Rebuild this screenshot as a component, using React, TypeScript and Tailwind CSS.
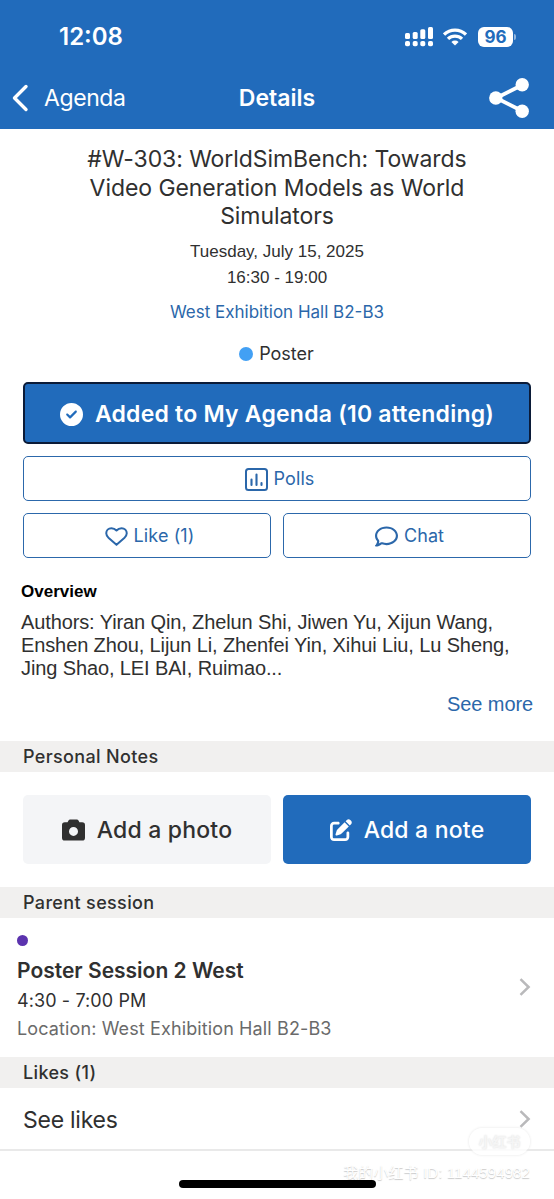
import React from 'react';
import { FaCircleCheck, FaPenToSquare, FaRegComment } from 'react-icons/fa6';

const SignalIcon = () => (
    <svg width="28" height="20" viewBox="0 0 28 20" fill="currentColor">
        <rect x="0" y="6" width="5" height="6" rx="1.5" />
        <rect x="7.7" y="5" width="5" height="7" rx="1.5" />
        <rect x="15.3" y="2.3" width="5" height="9.7" rx="1.5" />
        <rect x="23" y="0" width="5" height="12" rx="1.5" />
        <rect x="0" y="14" width="5" height="5.3" rx="1.8" />
        <rect x="7.7" y="14" width="5" height="5.3" rx="1.8" />
        <rect x="15.3" y="14" width="5" height="5.3" rx="1.8" />
        <rect x="23" y="14" width="5" height="5.3" rx="1.8" />
    </svg>
);

const WifiIcon = () => (
    <svg width="24" height="18" viewBox="0 0 24 18" fill="none" stroke="currentColor" strokeWidth="3.3">
        <path d="M1 6.6a15.6 15.6 0 0 1 22 0" />
        <path d="M5 10.9a10 10 0 0 1 14 0" />
        <path d="M12 17.6l-3.6-3.5a5.1 5.1 0 0 1 7.2 0z" fill="currentColor" stroke="none" />
    </svg>
);

const ShareIcon = () => (
    <svg width="42" height="42" viewBox="0 0 42 42" fill="currentColor">
        <path d="M34.7 7.7L8.3 21l26.4 13.3" fill="none" stroke="currentColor" strokeWidth="3.8" />
        <circle cx="34.2" cy="7.7" r="6.7" />
        <circle cx="7.8" cy="21" r="6.7" />
        <circle cx="34.2" cy="34.3" r="6.7" />
    </svg>
);

const PollIcon = () => (
    <svg width="23" height="23" viewBox="0 0 23 23" fill="none" stroke="currentColor" strokeLinecap="round">
        <rect x="1" y="1" width="21" height="21" rx="2.5" strokeWidth="2" />
        <path d="M6.500 11.500v5.500M11.500 6.500v10.500M16.500 15v2" strokeWidth="2.1" />
    </svg>
);

const HeartIcon = () => (
    <svg width="23" height="19" viewBox="0 0 24 20" fill="none" stroke="currentColor" strokeWidth="2.1" strokeLinejoin="round">
        <path d="M12 3.7C10.3 1.8 8.7 1.2 6.7 1.2 3.4 1.2 1.2 3.5 1.2 6.6c0 2.1 1 3.5 2.6 5.1L12 18.8l8.2-7.1c1.6-1.6 2.6-3 2.6-5.1 0-3.1-2.2-5.4-5.5-5.4-2 0-3.6.6-5.3 2.5z" />
    </svg>
);

const CameraIcon = () => (
    <svg width="23" height="22" viewBox="0 0 24 22" fill="currentColor" fillRule="evenodd">
        <path d="M8.5 0h7c.8 0 1.3.4 1.7 1l1 1.9H21a3 3 0 0 1 3 3V19a3 3 0 0 1-3 3H3a3 3 0 0 1-3-3V5.9a3 3 0 0 1 3-3h2.8L6.8 1C7.2.4 7.7 0 8.5 0zM12 7.8a4.7 4.7 0 1 0 0 9.4 4.7 4.7 0 0 0 0-9.4z" />
    </svg>
);

const Chevron = () => (
    <svg width="12" height="18" viewBox="0 0 12 18" fill="none" stroke="#b9b9bb" strokeWidth="2.5" className="mb-[2px] shrink-0">
        <path d="M1.5 1.2L9.6 9l-8.1 7.8" />
    </svg>
);

const SectionBar = ({ title, className = '' }: { title: string; className?: string }) => (
    <h2 className={`flex h-[31px] items-center bg-[#f1f0ef] pt-px pl-[23px] text-lg font-medium tracking-[0.35px] text-[#303030] ${className}`}>
        {title}
    </h2>
);

const outlineButton = 'flex h-[45px] items-center justify-center gap-[6px] rounded-[5px] border-[1.5px] border-[#2c68ab] pt-px pl-[5px] text-lg tracking-[0.1px] text-[#2b67aa]';

const App: React.FC = () => {
    return (
        <div className="relative h-[1199px] w-[554px] overflow-hidden bg-white font-['Inter',sans-serif] text-[#303030]">
            <header className="h-[129px] bg-[#216bbb] text-white">
                <div className="flex h-[67px] items-center pt-[7px] pr-[38px] pl-[59px]">
                    <span className="text-2xl font-semibold">12:08</span>
                    <div className="ml-auto flex items-center">
                        <SignalIcon />
                        <span className="ml-[10px]"><WifiIcon /></span>
                        <span className="ml-[11px] flex h-5 w-[35px] items-center justify-center rounded-md bg-white pt-px text-[17px] font-bold text-[#216bbb]">96</span>
                        <span className="ml-px h-[6px] w-[2px] rounded-r-full bg-white/50" />
                    </div>
                </div>
                <nav className="grid h-[62px] grid-cols-3 items-center px-[12px]">
                    <button className="flex items-center gap-[15px] text-left">
                        <svg width="17" height="28" viewBox="0 0 17 28" fill="none" stroke="currentColor" strokeWidth="3.4" strokeLinecap="round" strokeLinejoin="round">
                            <path d="M14 2.5L2.5 14 14 25.5" />
                        </svg>
                        <span className="text-[23px] tracking-[-0.4px]">Agenda</span>
                    </button>
                    <h1 className="text-center text-[23px] font-semibold">Details</h1>
                    <button className="mr-[12px] justify-self-end"><ShareIcon /></button>
                </nav>
            </header>

            <section className="flex flex-col items-center pt-[16px] text-center">
                <h2 className="text-[23px] leading-[28.7px] tracking-[-0.07px]">
                    #W-303: WorldSimBench: Towards<br />Video Generation Models as World<br />Simulators
                </h2>
                <p className="mt-[8px] font-['Liberation_Sans',sans-serif] text-[17px] leading-[25.5px]">
                    Tuesday, July 15, 2025<br />16:30 - 19:00
                </p>
                <a href="#" className="mt-[9px] text-[17px] leading-[26px] text-[#2b67aa]">West Exhibition Hall B2-B3</a>
                <p className="mt-[16px] mr-px flex items-center gap-[6px] text-lg leading-[26px]">
                    <span className="size-[14px] rounded-full bg-[#42a0f4]" />
                    Poster
                </p>
            </section>

            <section className="mt-[15px] grid grid-cols-2 gap-3 px-[23px]">
                <button className="col-span-2 flex h-[62px] items-center justify-center gap-3 rounded-[5px] border-2 border-[#0b1b38] bg-[#216bbb] pt-[2px] text-[23px] font-semibold tracking-[0.22px] text-white">
                    <FaCircleCheck size={23} />
                    Added to My Agenda (10 attending)
                </button>
                <button className={`col-span-2 ${outlineButton}`}><PollIcon />Polls</button>
                <button className={outlineButton}><HeartIcon />Like (1)</button>
                <button className={outlineButton}><FaRegComment size={23} />Chat</button>
            </section>

            <section className="mt-[22px] px-[21px] font-['Liberation_Sans',sans-serif]">
                <h3 className="text-[17px] leading-6 font-bold text-black">Overview</h3>
                <p className="mt-[7px] text-xl leading-[23px] tracking-[-0.115px]">
                    Authors: Yiran Qin, Zhelun Shi, Jiwen Yu, Xijun Wang,<br />
                    Enshen Zhou, Lijun Li, Zhenfei Yin, Xihui Liu, Lu Sheng,<br />
                    Jing Shao, LEI BAI, Ruimao...
                </p>
                <button className="mt-[11px] block w-full text-right text-xl leading-[26px] tracking-[-0.1px] text-[#2b67aa]">See more</button>
            </section>

            <SectionBar title="Personal Notes" className="mt-[24px]" />
            <div className="grid h-[115px] grid-cols-2 gap-3 px-[23px] pt-[23px]">
                <button className="flex h-[69px] items-center justify-center gap-3 rounded-[5px] bg-[#f4f5f7] pt-px text-[23px] font-medium tracking-[0.2px]">
                    <CameraIcon />
                    Add a photo
                </button>
                <button className="flex h-[69px] items-center justify-center gap-3 rounded-[5px] bg-[#216bbb] pt-px text-[23px] font-medium tracking-[0.2px] text-white">
                    <FaPenToSquare size={22} />
                    Add a note
                </button>
            </div>

            <SectionBar title="Parent session" />
            <div className="flex h-[139px] items-center justify-between pr-[23px] pl-[17px]">
                <div className="pt-[2px]">
                    <div className="size-[11px] rounded-full bg-[#5b33ae]" />
                    <h3 className="mt-[11px] text-[21px] leading-[28px] font-semibold">Poster Session 2 West</h3>
                    <p className="mt-[2px] text-lg leading-[28px] tracking-[0.1px]">4:30 - 7:00 PM</p>
                    <p className="text-lg leading-[28px] tracking-[0.12px] text-[#6a6a6a]">Location: West Exhibition Hall B2-B3</p>
                </div>
                <Chevron />
            </div>

            <SectionBar title="Likes (1)" />
            <div className="flex h-[63px] items-center justify-between border-b-2 border-[#e9e9e9] pt-[3px] pr-[23px] pl-[23px]">
                <span className="text-[23px] tracking-[-0.25px]">See likes</span>
                <Chevron />
            </div>

            {/* watermark floats over the page bottom */}
            <div className="absolute right-[24px] bottom-[15px] flex flex-col items-end font-['Liberation_Sans','Noto_Sans_CJK_SC',sans-serif] text-white">
                <span className="flex h-[27px] w-[61px] items-center justify-center rounded-full bg-white/80 text-sm font-bold text-[#f5f5f5] shadow-[0_0_3px_#e4e4e4] [text-shadow:0_0_2px_#ddd]">小红书</span>
                <span className="mt-[7px] text-[15px] leading-[22px] tracking-[0.1px] whitespace-nowrap [text-shadow:0_1px_1px_#c9c9c9]">我的小红书 ID: 1144594982</span>
            </div>
            <div className="absolute bottom-[11px] left-[179px] h-[8px] w-[197px] rounded-full bg-black" />
        </div>
    );
};

export default App;
